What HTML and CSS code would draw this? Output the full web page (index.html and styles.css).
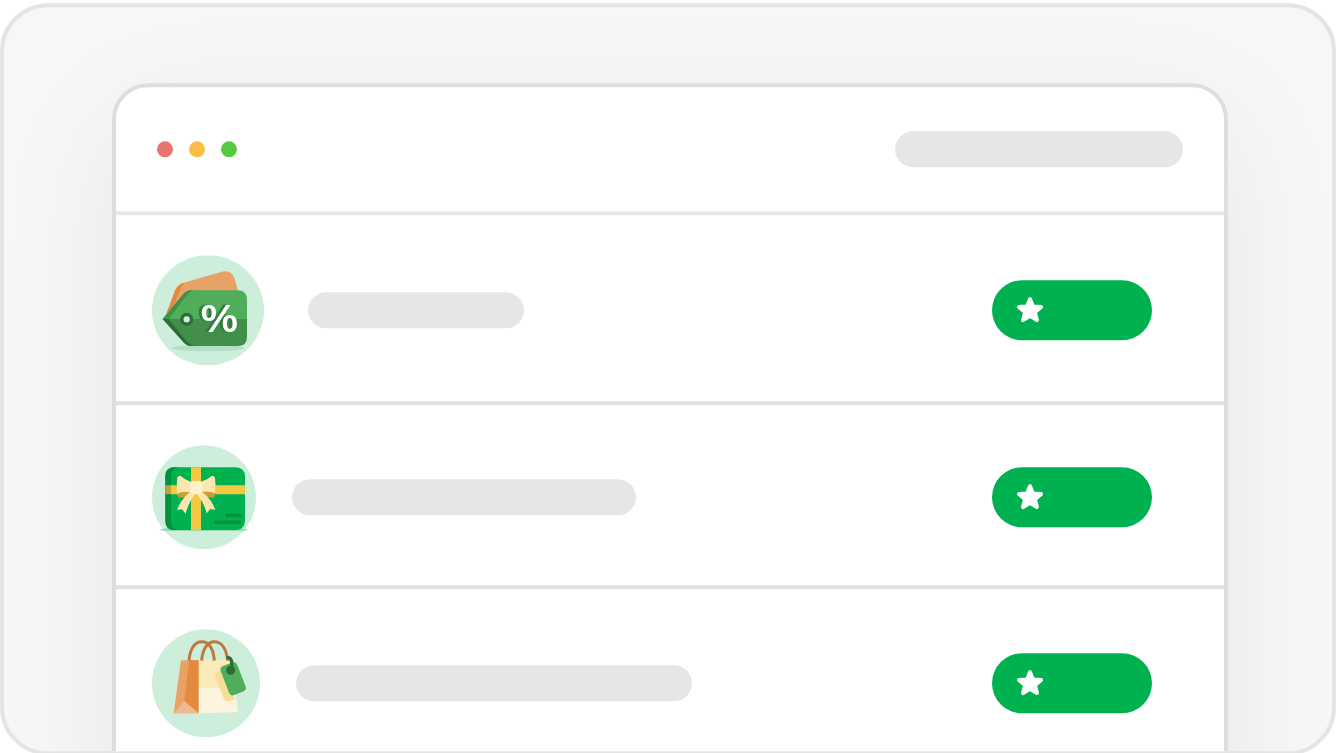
FILE: index.html
```html
<!DOCTYPE html>
<html lang="en">
<head>
<meta charset="utf-8">
<title>Rewards</title>
<link rel="stylesheet" href="styles.css">
</head>
<body>
<svg class="defs" aria-hidden="true">
  <symbol id="star" viewBox="0 0 28 28">
    <path d="M14 2.9 L17 10.2 L25 10.8 L18.9 16 L20.9 23.8 L14 19.6 L7.1 23.8 L9.1 16 L3 10.8 L11 10.2Z" fill="#fff" stroke="#fff" stroke-width="4" stroke-linejoin="round"/>
  </symbol>
</svg>
<main class="frame">
  <section class="window">
    <header class="titlebar">
      <div class="dots"><i class="dot red"></i><i class="dot yellow"></i><i class="dot green"></i></div>
      <div class="bar bar-title"></div>
    </header>
    <div class="row row-tag">
      <svg class="art" width="112" height="110" viewBox="21 15 336 330">
        <ellipse cx="189" cy="180" rx="168" ry="165" fill="#cceedb"/>
        <ellipse cx="189" cy="293" rx="109" ry="10" fill="#b2dfc5"/>
        <path d="M64 190 L91 119 Q99 103 113 98 L228 65 Q258 57 268 83 L280 124 L210 205Z" fill="#e9a265"/>
        <path d="M64 190 L91 119 Q98 104 113 98 L118 99 Q108 111 102 126 L84 172Z" fill="#e38a3d"/>
        <path d="M53 206 L115 131 Q125 120 139 120 H278 Q306 120 306 149 V209 H56Z" fill="#50ae5b"/>
        <path d="M53 206 H306 V259 Q306 287 278 287 H139 Q125 287 115 275Z" fill="#418f49"/>
        <path d="M53 206 L115 131 Q125 120 139 120 H146 Q134 124 126 133 L71 206 V209 H56Z" fill="#418f49"/>
        <path d="M53 206 H71 L124 273 Q134 284 147 287 H139 Q125 287 115 275Z" fill="#2d6c39"/>
        <circle cx="125" cy="207" r="14.5" fill="#cceedb" stroke="#2d6c39" stroke-width="10"/>
        <text class="percent" x="165" y="244" textLength="116" lengthAdjust="spacingAndGlyphs">%</text>
      </svg>
      <div class="bar bar-one"></div>
      <div class="pill"><svg class="star"><use href="#star"/></svg></div>
    </div>
    <div class="row row-gift">
      <svg class="art" width="104" height="104" viewBox="21 15 312 312">
        <circle cx="177" cy="171" r="156" fill="#cceedb"/>
        <path d="M42 268 Q55 263 75 263 H278 Q298 263 311 268 Q292 273 272 272 H80 Q58 273 42 268Z" fill="#98d9b2"/>
        <rect x="61" y="81" width="239" height="188" rx="26" fill="#00b24f"/>
        <path d="M104 81 H87 Q61 81 61 107 V243 Q61 269 87 269 H104 Q78 267 78 241 V109 Q78 83 104 81Z" fill="#00913f"/>
        <path d="M138 81H168V269H138Z M78 135H300V162H78Z" fill="#f5c842"/>
        <path d="M61 135H78V162H61Z" fill="#c6a037"/>
        <path d="M96 155 Q112 151 136 155 L137 162 Q118 174 102 172 Q95 168 96 155Z M170 155 Q194 151 210 155 Q212 168 205 172 Q189 174 170 162Z" fill="#c6a037"/>
        <path d="M153 158 Q131 184 122 220 L111 207 L96 209 Q107 179 132 157Z M153 158 Q176 184 185 219 L196 206 L211 208 Q200 178 175 157Z" fill="#fde7ae"/>
        <path d="M137 124 Q120 119 107 107 Q102 105 97 111 Q94 133 96 160 Q116 150 139 157Z M168 124 Q187 119 200 107 Q206 105 210 112 Q213 135 210 159 Q190 150 168 157Z" fill="#fde7ae"/>
        <rect x="135" y="122" width="36" height="39" rx="10" fill="#fff2d2"/>
        <path d="M246 225H283 M213 246H283" stroke="#00913f" stroke-width="11" stroke-linecap="round"/>
      </svg>
      <div class="bar bar-two"></div>
      <div class="pill"><svg class="star"><use href="#star"/></svg></div>
    </div>
    <div class="row row-bag">
      <svg class="art" width="108" height="108" viewBox="21 15 324 324">
        <circle cx="183" cy="177" r="162" fill="#cceedb"/>
        <path d="M108 108H162V267H86Z" fill="#e9a265"/>
        <path d="M133 108H162V267L118 230Z" fill="#e38a3d"/>
        <path d="M118 230L86 267H160Z" fill="#f0ba91"/>
        <path d="M161 108H257L269 192H161Z" fill="#f9eaba"/>
        <path d="M161 192H269L280 264L161 267Z" fill="#fbf4df"/>
        <path d="M217 143L231 136L263 214L272 224L251 231Q241 233 237 224L211 158Q207 148 217 143Z" fill="#f6df95"/>
        <g fill="none" stroke="#bf783e" stroke-width="9">
          <path d="M132 109C135 71 151 52 170 52C191 52 205 72 208 109"/>
          <path d="M170 109C173 71 189 52 208 52C229 52 244 72 248 109"/>
        </g>
        <rect x="238" y="117" width="53" height="93" rx="12" transform="rotate(-21 264.500 163.500)" fill="#50ae5b"/>
        <circle cx="257" cy="138" r="13.500" fill="#2d6c39"/>
        <path d="M249 100Q258 101 260 112V134" fill="none" stroke="#2d6c39" stroke-width="10" stroke-linecap="round"/>
      </svg>
      <div class="bar bar-three"></div>
      <div class="pill"><svg class="star"><use href="#star"/></svg></div>
    </div>
  </section>
</main>
</body>
</html>
```

FILE: styles.css
```css
* {
  box-sizing: border-box;
}

body {
  margin: 0;
  height: 753px;
  padding-top: 4px;
  overflow: hidden;
  background: #fff;
}

.defs {
  display: none;
}

.frame {
  height: 752px;
  padding: 76px 104px 0 108px;
  overflow: hidden;
  border: 4px solid #e3e4e5;
  border-radius: 48px;
  background: #f7f7f7;
  transform: translateY(-0.7px);
}

.window {
  height: 760px;
  border: 4px solid #dddedf;
  border-radius: 36px 36px 0 0;
  background: #fff;
  box-shadow: 0 36px 130px rgba(0, 0, 0, 0.065);
}

.titlebar {
  display: flex;
  align-items: center;
  justify-content: space-between;
  height: 128px;
  padding: 0 41px;
  border-bottom: 4px solid #e7e7e8;
}

.dots {
  display: flex;
  gap: 16px;
}

.dot {
  width: 16px;
  height: 16px;
  border-radius: 50%;
}

.red {
  background: #e8746b;
}

.yellow {
  background: #fcbd43;
}

.green {
  background: #57c840;
}

.bar {
  height: 36px;
  border-radius: 18px;
  background: #e5e6e8;
}

.bar-title {
  width: 288px;
}

.row {
  display: flex;
  align-items: center;
  padding: 4px 72px 0 36px;
  border-bottom: 4px solid #dfe0e1;
}

.row-tag {
  height: 190px;
  gap: 44px;
}

.row-gift {
  height: 184px;
  gap: 36px;
}

.row-bag {
  height: 188px;
  padding-top: 0;
  gap: 36px;
  border-bottom: 0;
}

.art {
  display: block;
}

.percent {
  font: 600 114px "Open Sans", sans-serif;
  fill: #fff;
  filter: drop-shadow(-9px -1px 0 #2f7a3c);
}

.bar-one {
  width: 216px;
}

.bar-two {
  width: 344px;
}

.bar-three {
  width: 396px;
}

.pill {
  display: flex;
  align-items: center;
  width: 160px;
  height: 60px;
  margin-left: auto;
  padding-left: 24px;
  border-radius: 30px;
  background: #00b24f;
}

.star {
  width: 28px;
  height: 28px;
}
```
